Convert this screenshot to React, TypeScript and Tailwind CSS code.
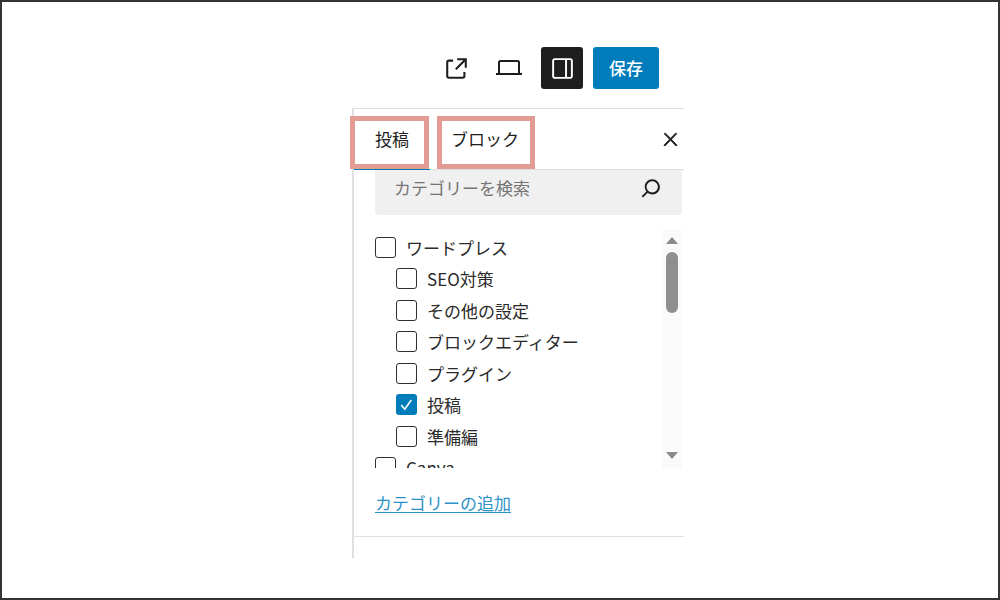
const FONT = "font-['Noto_Sans_CJK_JP','Noto_Sans',sans-serif]";

function Check({ checked }: { checked?: boolean }) {
  if (checked) {
    return (
      <span className="flex h-[21px] w-[21px] shrink-0 items-center justify-center rounded-[3px] bg-[#007cba]">
        <svg viewBox="0 0 24 24" className="h-[21px] w-[21px]" fill="none" stroke="#fff" strokeWidth="1.8">
          <path d="M6 12.5l4 4.8 7.5-10.5" />
        </svg>
      </span>
    );
  }
  return <span className="h-[21px] w-[21px] shrink-0 rounded-[3px] border-[1.5px] border-[#2f2f2f] bg-white" />;
}

function Row({ label, child, checked }: { label: string; child?: boolean; checked?: boolean }) {
  return (
    <div className={`flex h-[31.5px] shrink-0 items-center gap-[10px] ${child ? "pl-[21px]" : ""}`}>
      <Check checked={checked} />
      <span className="text-[17px] leading-none text-[#2a2a2a]">{label}</span>
    </div>
  );
}

export default function App() {
  return (
    <div className={`h-[600px] w-[1000px] overflow-hidden border-2 border-[#333] bg-white ${FONT}`}>
      <div className="ml-[350px] w-[332px] pt-[45px]">
        <div className="flex h-[42px] items-center justify-end pr-[25px]">
          <div className="mr-[8px] flex w-[43px] justify-center">
            <svg viewBox="0 0 24 24" className="h-[33px] w-[33px]" fill="#1e1e1e">
              <path d="M19.5 4.5h-7V6h4.44l-5.97 5.97 1.06 1.06L18 7.06v4.44h1.5v-7Zm-13 1a2 2 0 0 0-2 2v10a2 2 0 0 0 2 2h10a2 2 0 0 0 2-2v-3H17v3a.5.5 0 0 1-.5.5h-10a.5.5 0 0 1-.5-.5v-10a.5.5 0 0 1 .5-.5h3V5.5h-3Z" />
            </svg>
          </div>
          <div className="ml-[10px] mr-[9px] flex w-[26px] justify-center">
            <svg viewBox="0 0 26 18" className="h-[18px] w-[26px]" fill="none" stroke="#1e1e1e" strokeWidth="2">
              <path d="M3 14V3.5a1.5 1.5 0 0 1 1.5-1.5h17a1.5 1.5 0 0 1 1.5 1.5V14" />
              <path d="M0 15h26" />
            </svg>
          </div>
          <div className="ml-[10px] flex h-[42px] w-[42px] items-center justify-center rounded-[3px] bg-[#1e1e1e]">
            <svg viewBox="0 0 24 24" className="h-[31px] w-[31px]" fill="#fff">
              <path d="M18 4H6c-1.1 0-2 .9-2 2v12c0 1.1.9 2 2 2h12c1.1 0 2-.9 2-2V6c0-1.1-.9-2-2-2zM6 18.5a.5.5 0 0 1-.5-.5V6a.5.5 0 0 1 .5-.5h8v13H6zm12.5-.5a.5.5 0 0 1-.5.5h-2.5v-13H18a.5.5 0 0 1 .5.5v12z" />
            </svg>
          </div>
          <div className="ml-[10px] flex h-[42px] w-[66px] items-center justify-center rounded-[3px] bg-[#007cba] text-[17px] font-medium text-white">
            保存
          </div>
        </div>

        <div className="mt-[19px] flex h-[450px] flex-col border-l-2 border-t border-[#e0e0e0]">
          <div className="relative flex h-[61px] shrink-0 items-center border-b border-[#e0e0e0]">
            <div className="absolute bottom-[-1px] left-0 h-[1px] w-[76px] bg-[#007cba]" />
            <span className="ml-[21px] mt-[-2px] text-[17px] leading-none text-[#1e1e1e]">投稿</span>
            <span className="ml-[42px] mt-[-2px] text-[17px] leading-none text-[#1e1e1e]">ブロック</span>
            <svg viewBox="0 0 24 24" className="absolute left-[306px] top-[20px] h-[21px] w-[21px]" fill="#1e1e1e" stroke="#1e1e1e" strokeWidth="1">
              <path d="M13 11.8l6.1-6.3-1-1-6.1 6.2-6.1-6.2-1 1 6.1 6.3-6.5 6.7 1 1 6.5-6.6 6.5 6.6 1-1z" />
            </svg>
            <div className="absolute left-[-4px] top-[7px] h-[53px] w-[79px] border-[5px] border-[#e29c94]" />
            <div className="absolute left-[83px] top-[7px] h-[53px] w-[98px] border-[5px] border-[#e29c94]" />
          </div>

          <div className="ml-[21px] mr-[2px] flex h-[45px] shrink-0 items-center justify-between rounded-b-[3px] bg-[#f0f0f0] pl-[19px] pr-[16px]">
            <span className="mt-[-10px] text-[17px] leading-none text-[#757575]">カテゴリーを検索</span>
            <svg viewBox="0 0 24 24" className="mt-[-9px] h-[30px] w-[30px]" fill="#1e1e1e">
              <path d="M13 5c-3.3 0-6 2.7-6 6 0 1.4.5 2.7 1.3 3.7l-3.8 3.8 1.1 1.1 3.8-3.8c1 .8 2.3 1.3 3.7 1.3 3.3 0 6-2.7 6-6S16.3 5 13 5zm0 10.5c-2.5 0-4.5-2-4.5-4.5s2-4.5 4.5-4.5 4.5 2 4.5 4.5-2 4.5-4.5 4.5z" />
            </svg>
          </div>

          <div className="ml-[21px] mr-[2px] mt-[14px] flex h-[239px] shrink-0 overflow-hidden">
            <div className="flex min-w-0 flex-1 flex-col overflow-hidden pt-[2.5px]">
              <Row label="ワードプレス" />
              <Row label="SEO対策" child />
              <Row label="その他の設定" child />
              <Row label="ブロックエディター" child />
              <Row label="プラグイン" child />
              <Row label="投稿" child checked />
              <Row label="準備編" child />
              <Row label="Canva" />
            </div>
            <div className="flex w-[20px] shrink-0 flex-col items-center bg-[#fafafa] pt-[8px]">
              <div className="h-0 w-0 border-x-[6px] border-b-[7px] border-x-transparent border-b-[#8a8a8a]" />
              <div className="mt-[8px] h-[61px] w-[12px] rounded-full bg-[#8f8f8f]" />
              <div className="mt-[139px] h-0 w-0 border-x-[6px] border-t-[7px] border-x-transparent border-t-[#8a8a8a]" />
            </div>
          </div>

          <div className="ml-[21px] mt-[23px] h-[20px] shrink-0">
            <span className="text-[17px] leading-[20px] text-[#2c93c9] underline underline-offset-2">カテゴリーの追加</span>
          </div>
          <div className="mt-[25px] h-[1px] shrink-0 bg-[#e0e0e0]" />
        </div>
      </div>
    </div>
  );
}
